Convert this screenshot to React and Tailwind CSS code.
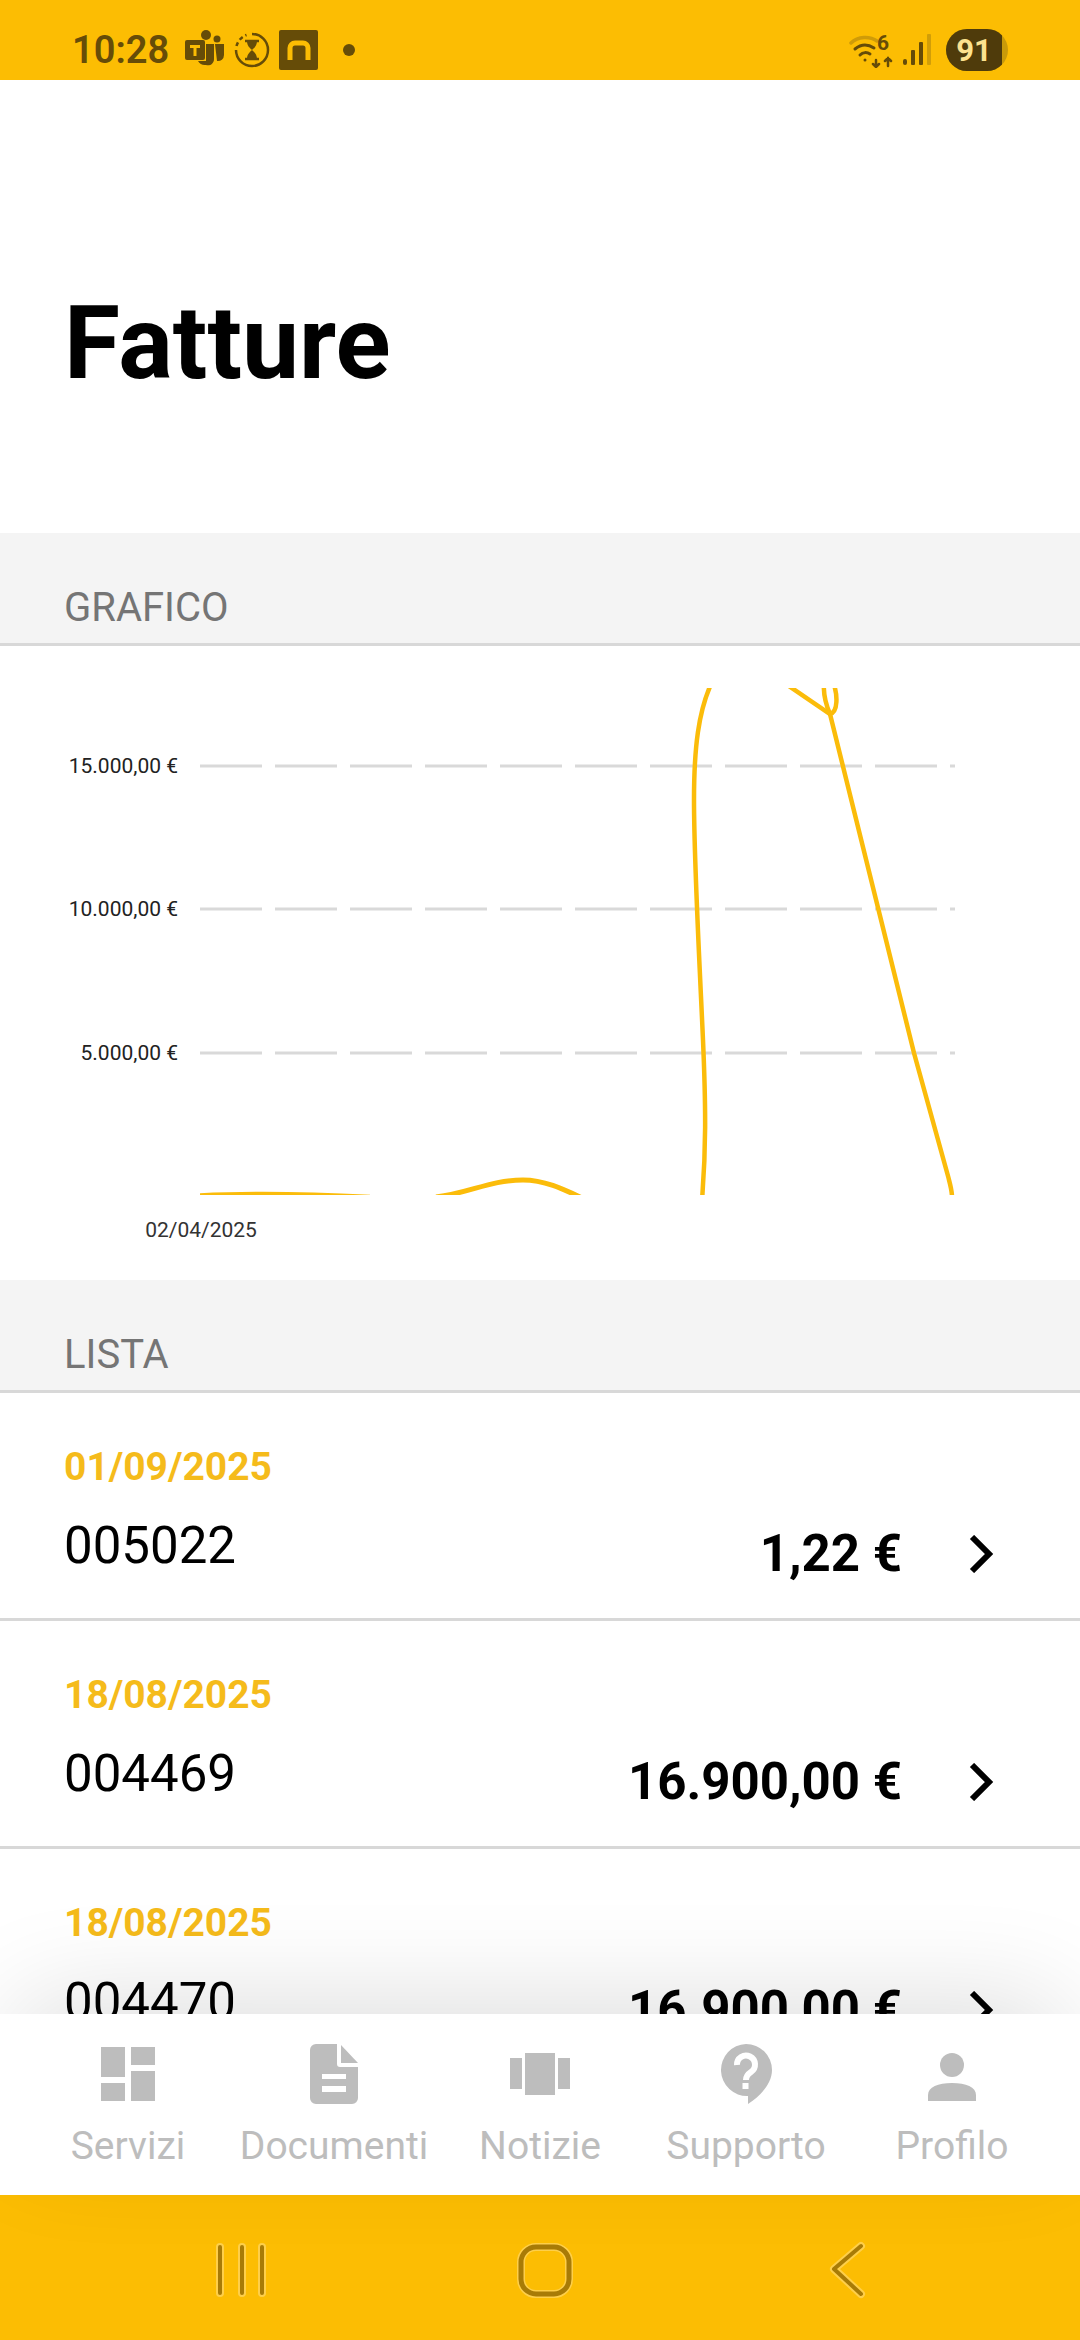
const invoices = [
  { date: '01/09/2025', number: '005022', amount: '1,22 €' },
  { date: '18/08/2025', number: '004469', amount: '16.900,00 €' },
  { date: '18/08/2025', number: '004470', amount: '16.900,00 €' },
];

const StatusBar = () => (
  <div className="relative h-[80px] shrink-0 bg-[#fcbd03] flex items-center pt-[20px] text-[#664c08]">
    <span className="ml-[72px] text-[38px] font-semibold leading-none">10:28</span>
    <svg width="40" height="40" viewBox="0 0 40 40" className="ml-[16px]" fill="currentColor">
      <circle cx="21" cy="5" r="5" />
      <circle cx="32" cy="9" r="3.5" />
      <rect x="0" y="10" width="20" height="20" rx="2" />
      <path d="M21 14h8v15a6 6 0 0 1-8 6 8 8 0 0 1-8-4h8z" />
      <path d="M30 14h9v11a6 6 0 0 1-7 6z" />
      <path d="M5 15h10v3h-3.5v8h-3v-8H5z" fill="#fcbd03" />
    </svg>
    <svg width="36" height="36" viewBox="0 0 36 36" className="ml-[9px]" fill="none" stroke="currentColor">
      <path d="M18 2a16 16 0 1 1-16 16" strokeWidth="2.5" />
      <path d="M2.5 14a16 16 0 0 1 10-11" strokeWidth="2.5" strokeDasharray="4 3" />
      <path d="M11 9h14M11 27h14" strokeWidth="2.5" />
      <path d="M13 9h10c0 5-3 7-5 9 2 2 5 4 5 9H13c0-5 3-7 5-9-2-2-5-4-5-9z" fill="currentColor" stroke="none" />
    </svg>
    <div className="ml-[9px] w-[39px] h-[40px] rounded-[2px] bg-current flex items-center justify-center">
      <svg width="24" height="20" viewBox="0 0 24 20" fill="none" stroke="#fcbd03" strokeWidth="5">
        <path d="M3 20V8a5 5 0 0 1 5-5h8a5 5 0 0 1 5 5v12" />
      </svg>
    </div>
    <span className="ml-[25px] w-[12px] h-[12px] rounded-full bg-current" />
    <div className="ml-auto mr-[72px] flex items-center">
      <svg width="46" height="36" viewBox="0 0 46 36" fill="none" stroke="currentColor" strokeWidth="3" strokeLinecap="round">
        <path d="M2 11c7-7 19-7 26-2" stroke="#cf9b08" strokeWidth="3.5" />
        <path d="M6 17c6-5 13-5 19-1" />
        <path d="M11 23c3-3 7-3 10-1" />
        <circle cx="16" cy="28" r="1.5" fill="currentColor" stroke="none" />
        <path d="M27 28v7m-3-3l3 3 3-3M39 34v-8m-3 3l3-3 3 3" strokeWidth="2.5" />
        <text x="28" y="18" fontSize="21" fontWeight="700" fill="currentColor" stroke="none" style={{ fontFamily: 'Roboto, sans-serif' }}>6</text>
      </svg>
      <svg width="28" height="32" viewBox="0 0 28 32" className="ml-[8px]">
        <rect x="0" y="25" width="4" height="6" rx="2" fill="#664c08" />
        <rect x="8" y="16" width="4" height="15" rx="1" fill="#664c08" />
        <rect x="16" y="8" width="4" height="23" rx="1" fill="#664c08" />
        <rect x="24" y="0" width="4" height="31" rx="1" fill="#d19e08" />
      </svg>
      <div className="ml-[15px] relative w-[62px] h-[42px] rounded-full bg-[#c99a0a] overflow-hidden">
        <div className="w-[56px] h-full bg-[#4f3b0b] flex items-center justify-center text-[#fce28f] text-[31px] font-bold leading-none rounded-r-[6px]">91</div>
      </div>
    </div>
  </div>
);

const SectionHeader = ({ label }) => (
  <div className="h-[113px] bg-[#f4f4f4] border-b-[3px] border-[#d8d8d8] flex items-end pl-[64px] pb-[12px]">
    <span className="text-[40px] leading-[46px] text-[#757575]">{label}</span>
  </div>
);

// coordinates are the page's own, shifted by the viewBox
const Chart = () => (
  <svg className="block w-full h-[634px]" viewBox="0 646 1080 634">
    <defs>
      <clipPath id="plot">
        <rect x="200" y="688" width="760" height="507" />
      </clipPath>
    </defs>
    {[
      [766, '15.000,00 €'],
      [909, '10.000,00 €'],
      [1053, '5.000,00 €'],
    ].map(([y, label]) => (
      <g key={y}>
        <line x1="200" x2="955" y1={y} y2={y} stroke="#d9d9d9" strokeWidth="3" strokeDasharray="62 13" />
        <text x="178" y={y + 7} textAnchor="end" fontSize="21" fill="#222" style={{ fontFamily: 'Roboto, sans-serif' }}>{label}</text>
      </g>
    ))}
    <text x="201" y="1237" textAnchor="middle" fontSize="21" fill="#333" style={{ fontFamily: 'Roboto, sans-serif' }}>02/04/2025</text>
    <g clipPath="url(#plot)" fill="none" stroke="#fbbc0a" strokeWidth="4.5">
      <path d="M200 1195.5C240 1193.5 300 1193.5 370 1197" />
      <path d="M436 1197C470 1193 490 1180 523 1180C545 1180 565 1190 582 1198" strokeWidth="5" />
      <path d="M702 1200C706 1150 706 1110 703 1040C698 930 694 860 694 800C694 750 698 710 713 680" />
      <path d="M783 682L830 714C838 712 838 695 833 682" />
      <path d="M824 682C823 695 826 705 830 714L914 1053L948 1176C950 1184 952 1190 952 1197" />
    </g>
  </svg>
);

const InvoiceRow = ({ date, number, amount }) => (
  <div className="h-[228px] shrink-0 border-b-[3px] border-[#d8d8d8] pl-[64px] pr-[86px] pt-[52px]">
    <div className="text-[39px] leading-[44px] font-bold text-[#f5bb1b]">{date}</div>
    <div className="mt-[28px] flex items-start justify-between">
      <span className="text-[51px] leading-[58px] text-black">{number}</span>
      <div className="flex items-center mt-[8px]">
        <span className="text-[51px] leading-[58px] font-bold text-black">{amount}</span>
        <svg width="26" height="38" viewBox="0 0 26 38" className="ml-[66px]" fill="none" stroke="black" strokeWidth="6">
          <path d="M4 2l17 17L4 36" />
        </svg>
      </div>
    </div>
  </div>
);

const NavIcon = ({ name }) => {
  if (name === 'Servizi') {
    return (
      <svg width="54" height="54" viewBox="0 0 54 54" fill="#bdbdbd">
        <rect x="0" y="0" width="24" height="30" />
        <rect x="0" y="36" width="24" height="18" />
        <rect x="30" y="0" width="24" height="18" />
        <rect x="30" y="24" width="24" height="30" />
      </svg>
    );
  }
  if (name === 'Documenti') {
    return (
      <svg width="48" height="60" viewBox="0 0 48 60" fill="#bdbdbd" className="-mt-[3px]">
        <path d="M6 0h21v20a3 3 0 0 0 3 3h18v31a6 6 0 0 1-6 6H6a6 6 0 0 1-6-6V6a6 6 0 0 1 6-6z" />
        <path d="M31 1l17 18H31z" />
        <rect x="12" y="30" width="24" height="5" fill="#fff" />
        <rect x="12" y="42" width="24" height="6" fill="#fff" />
      </svg>
    );
  }
  if (name === 'Notizie') {
    return (
      <svg width="60" height="42" viewBox="0 0 60 42" fill="#bdbdbd" className="mt-[6px]">
        <rect x="0" y="5" width="12" height="31" />
        <rect x="15" y="0" width="30" height="42" />
        <rect x="48" y="5" width="12" height="31" />
      </svg>
    );
  }
  if (name === 'Supporto') {
    return (
      <svg width="52" height="60" viewBox="0 0 52 60" className="-mt-[3px]">
        <path d="M26 0a26 26 0 0 1 26 26c0 14-12 26-24 34v-8A26 26 0 0 1 26 0z" fill="#bdbdbd" />
        <path d="M17 21a9 9 0 1 1 14 7c-3 2-5 4-5 8" fill="none" stroke="#fff" strokeWidth="6" />
        <rect x="22.5" y="39" width="6" height="6" fill="#fff" />
      </svg>
    );
  }
  return (
    <svg width="48" height="48" viewBox="0 0 48 48" fill="#bdbdbd" className="mt-[6px]">
      <ellipse cx="24" cy="12" rx="12" ry="12" />
      <path d="M0 48V42C0 34 10 30 24 30S48 34 48 42V48z" />
    </svg>
  );
};

const tabs = ['Servizi', 'Documenti', 'Notizie', 'Supporto', 'Profilo'];

const BottomNav = () => (
  <nav className="relative z-10 h-[181px] shrink-0 bg-white grid grid-cols-5 px-[25px] pt-[33px] shadow-[0_-30px_110px_-20px_rgba(0,0,0,0.14)]">
    {tabs.map((label) => (
      <div key={label} className="flex flex-col items-center">
        <div className="h-[54px] flex items-start justify-center">
          <NavIcon name={label} />
        </div>
        <span className="mt-[23px] text-[39px] leading-[44px] text-[#bdbdbd] whitespace-nowrap">{label}</span>
      </div>
    ))}
  </nav>
);

const SystemBar = () => (
  <div className="h-[145px] shrink-0 bg-[#fcbd03] flex items-start justify-center">
    <svg width="1080" height="145" viewBox="0 2195 1080 145" fill="none" strokeLinecap="round" strokeLinejoin="round">
      <g stroke="#ffd76a" strokeWidth="8" opacity="0.7">
        <path d="M220 2247v46M242 2247v46M262 2247v46" />
        <rect x="521" y="2247" width="48" height="47" rx="15" />
        <path d="M861 2246l-27 23 27 25" />
      </g>
      <g stroke="#a87b06" strokeWidth="4">
        <path d="M220 2247v46M242 2247v46M262 2247v46" />
        <rect x="521" y="2247" width="48" height="47" rx="15" strokeWidth="5" />
        <path d="M861 2246l-27 23 27 25" />
      </g>
    </svg>
  </div>
);

const App = () => (
  <div className="w-[1080px] h-[2340px] flex flex-col overflow-hidden bg-white" style={{ fontFamily: 'Roboto, sans-serif' }}>
    <StatusBar />
    <main className="flex-1 min-h-0 overflow-hidden">
      <div className="h-[453px] pl-[64px] pt-[208px]">
        <h1 className="text-[102px] leading-[110px] font-bold text-black">Fatture</h1>
      </div>
      <SectionHeader label="GRAFICO" />
      <Chart />
      <SectionHeader label="LISTA" />
      {invoices.map((invoice, i) => (
        <InvoiceRow key={i} {...invoice} />
      ))}
    </main>
    <BottomNav />
    <SystemBar />
  </div>
);

export default App;
